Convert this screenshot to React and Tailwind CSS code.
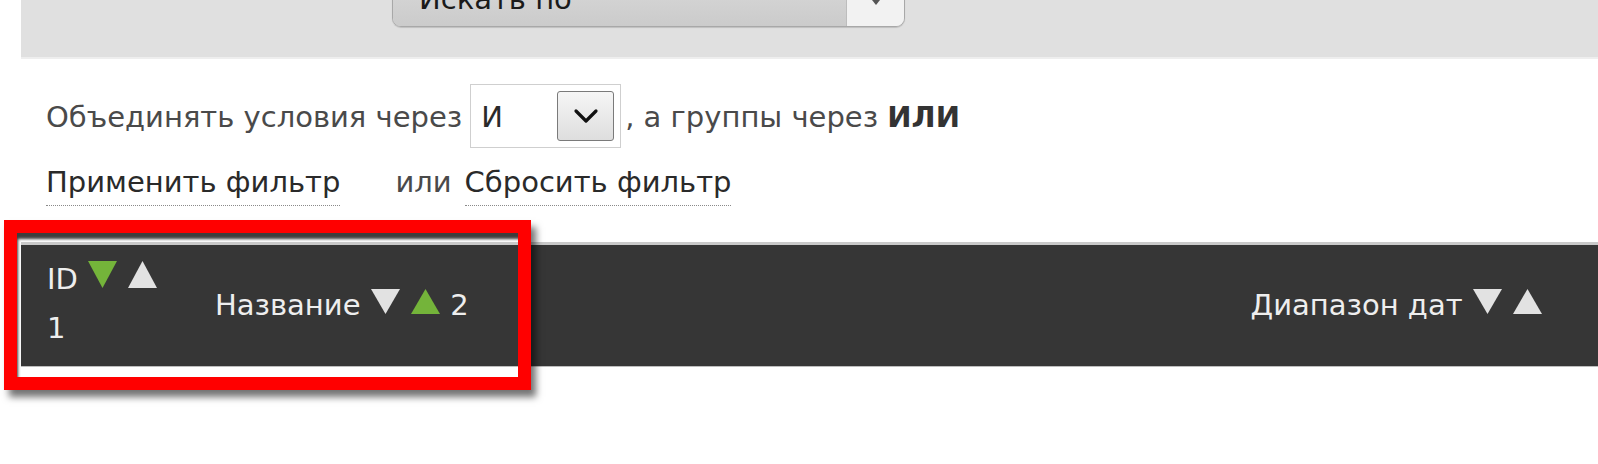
import React from "react";

function Tri({ dir, color, w = 31, h = 28 }) {
  return (
    <svg width={w} height={h} viewBox="0 0 31 28" preserveAspectRatio="none" className="inline-block" style={{ verticalAlign: "baseline" }}>
      {dir === "down" ? (
        <polygon points="1,1 30,1 15.5,27" fill={color} />
      ) : (
        <polygon points="15.5,1 30,27 1,27" fill={color} />
      )}
    </svg>
  );
}

const GREEN = "#74b43a";
const LIGHT = "#e2e2e2";

export default function App() {
  return (
    <div
      className="relative w-[1598px] h-[464px] overflow-hidden bg-white"
      style={{ fontFamily: '"DejaVu Sans", Verdana, sans-serif' }}
    >
      {/* top grey filter panel */}
      <div className="ml-[21px] h-[59px] bg-[#e0e0e0] border-b-2 border-[#eeeeee] overflow-hidden">
        <div className="ml-[371px] mt-[-23px] w-[513px] h-[50px] flex rounded-b-[9px] border border-[#a8a8a8] overflow-hidden shadow-[0_1px_1px_rgba(0,0,0,0.15)]">
          <div className="flex-1 bg-gradient-to-b from-[#d9d9d9] to-[#cbcbcb] pl-[26px] pt-[7px] text-[29px] leading-[28px] text-[#1a1a1a]">
            Искать по
          </div>
          <div className="w-[58px] bg-[#f2f2f2] border-l border-[#bdbdbd] flex justify-center">
            <div className="w-0 h-0 border-l-[4px] border-r-[4px] border-t-[5px] border-l-transparent border-r-transparent border-t-[#555] mt-[22px]" />
          </div>
        </div>
      </div>

      {/* combine row */}
      <div className="mt-[25px] pl-[46px] flex items-center h-[64px] text-[29px] text-[#4a4a4a]">
        <span className="mt-[4px]">Объединять условия через</span>
        <div className="ml-[8px] w-[151px] h-[64px] border border-[#cfcfcf] bg-white flex items-center pl-[10px] pr-[6px]">
          <span className="text-[#2a2a2a] mt-[4px]">И</span>
          <div className="ml-auto w-[57px] h-[50px] rounded-[3px] border border-[#7a7a7a] bg-gradient-to-b from-[#f6f6f6] to-[#dedede] flex items-center justify-center">
            <svg width="26" height="16" viewBox="0 0 26 16">
              <polyline points="3,3 13,13 23,3" fill="none" stroke="#111" strokeWidth="3.2" strokeLinecap="round" strokeLinejoin="round" />
            </svg>
          </div>
        </div>
        <span className="ml-[4px] mt-[4px]">, а группы через <b className="font-bold text-[#333]">ИЛИ</b></span>
      </div>

      {/* links row */}
      <div className="mt-[20px] pl-[46px] flex items-start text-[29px] leading-[28px] text-[#2a2a2a]">
        <span className="pb-[9px] border-b border-dotted border-[#8a8a8a]">Применить фильтр</span>
        <span className="ml-[55px] text-[#4a4a4a]">или</span>
        <span className="ml-[13px] pb-[9px] border-b border-dotted border-[#8a8a8a]">Сбросить фильтр</span>
      </div>

      {/* table header */}
      <div className="mt-[36px] ml-[21px] h-[125px] bg-[#363636] border-t-[3px] border-[#c9c9c9] border-b border-b-[#bdbdbd] flex items-start text-[29px] text-[#eeeeee]">
        <div className="w-[194px] pl-[26px] pt-[15px]">
          <div className="leading-[28px] whitespace-nowrap">
            ID <Tri dir="down" color={GREEN} h={29} /> <Tri dir="up" color={LIGHT} h={29} />
          </div>
          <div className="mt-[21px] leading-[28px]">1</div>
        </div>
        <div className="pt-[43px] leading-[28px] whitespace-nowrap">
          Название <Tri dir="down" color={LIGHT} h={27} /> <Tri dir="up" color={GREEN} h={27} /> 2
        </div>
        <div className="ml-auto pr-[55px] pt-[43px] leading-[28px] whitespace-nowrap">
          Диапазон дат <Tri dir="down" color={LIGHT} h={27} /> <Tri dir="up" color={LIGHT} h={27} />
        </div>
      </div>

      {/* red highlight annotation */}
      <div className="absolute left-[4px] top-[220px] w-[527px] h-[170px] border-[13px] border-[#ff0000] shadow-[5px_7px_7px_rgba(0,0,0,0.55),inset_4px_9px_3px_-3px_rgba(40,40,40,0.9)] pointer-events-none" />
    </div>
  );
}
